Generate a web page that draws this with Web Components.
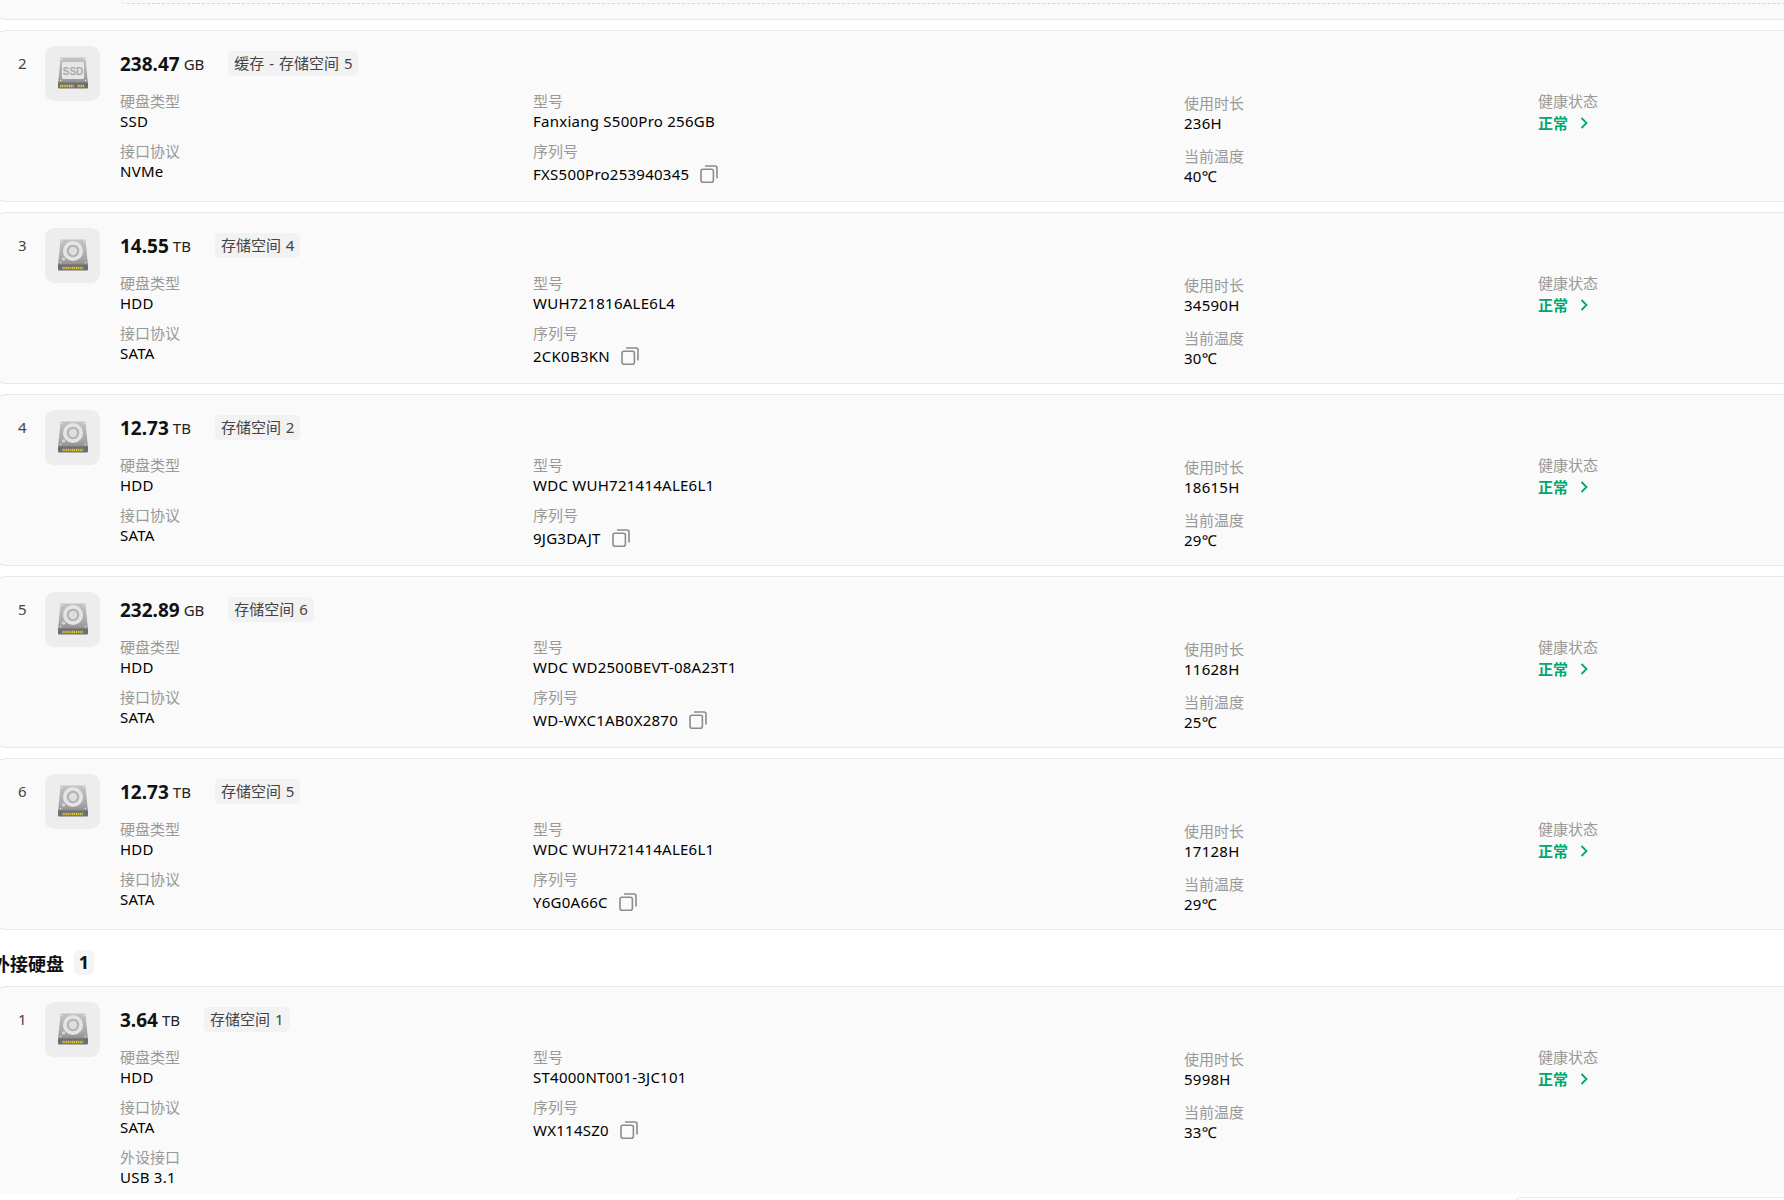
<!DOCTYPE html>
<html lang="zh">
<head>
<meta charset="utf-8">
<title>硬盘列表</title>
<style>
	html, body {
		margin: 0;
		height: 1200px;
		overflow: hidden;
		background: #fff;
	}
	body {
		font-family: "Noto Sans", "Noto Sans CJK SC", sans-serif;
		font-size: 15px;
		color: #000;
	}
	disk-list {
		margin: -10px 0 0 -6px;
		width: 1800px;
	}
</style>
</head>
<body>
<disk-list>
	<disk-stub></disk-stub>
	<disk-card index="2" kind="ssd" size="238.47" unit="GB" tag="缓存 - 存储空间 5" type="SSD" proto="NVMe" model="Fanxiang S500Pro 256GB" serial="FXS500Pro253940345" hours="236H" temp="40℃"></disk-card>
	<disk-card index="3" size="14.55" unit="TB" tag="存储空间 4" type="HDD" proto="SATA" model="WUH721816ALE6L4" serial="2CK0B3KN" hours="34590H" temp="30℃"></disk-card>
	<disk-card index="4" size="12.73" unit="TB" tag="存储空间 2" type="HDD" proto="SATA" model="WDC WUH721414ALE6L1" serial="9JG3DAJT" hours="18615H" temp="29℃"></disk-card>
	<disk-card index="5" size="232.89" unit="GB" tag="存储空间 6" type="HDD" proto="SATA" model="WDC WD2500BEVT-08A23T1" serial="WD-WXC1AB0X2870" hours="11628H" temp="25℃"></disk-card>
	<disk-card index="6" size="12.73" unit="TB" tag="存储空间 5" type="HDD" proto="SATA" model="WDC WUH721414ALE6L1" serial="Y6G0A66C" hours="17128H" temp="29℃"></disk-card>
	<section-title count="1">外接硬盘</section-title>
	<disk-card index="1" size="3.64" unit="TB" tag="存储空间 1" type="HDD" proto="SATA" port="USB 3.1" model="ST4000NT001-3JC101" serial="WX114SZ0" hours="5998H" temp="33℃"></disk-card>
</disk-list>
<float-panel></float-panel>

<template id="disk-card-tpl">
	<style>
		:host {
			display: block;
			box-sizing: border-box;
			height: 172px;
			margin-bottom: 10px;
			background: #fafafa;
			border: 1px solid #e8e8e8;
			border-right: 0;
			border-radius: 12px;
		}
		:host([port]) {
			height: 207px;
			margin-bottom: 0;
			border-bottom: 0;
			border-radius: 12px 0 0 0;
		}
		.row {
			display: flex;
			padding: 16px 0 0 23px;
		}
		.num {
			width: 27px;
			flex: none;
			color: #444;
			line-height: 33px;
			font-size: 15px;
		}
		disk-icon {
			margin-top: -1px;
		}
		.main {
			margin-left: 20px;
			flex: 1;
		}
		.head {
			display: flex;
			align-items: center;
			height: 33px;
		}
		.size {
			font-size: 19px;
			font-weight: 700;
			color: #111;
		}
		.unit {
			margin-left: 4px;
			font-size: 15px;
			color: #222;
		}
		.tag {
			margin-left: 24px;
			height: 25px;
			line-height: 25px;
			padding: 0 6px;
			background: #f2f2f2;
			border-radius: 5px;
			color: #444;
			font-size: 15px;
			word-spacing: 1px;
		}
		.grid {
			display: grid;
			grid-template-columns: 413px 651px 354px 1fr;
			margin-top: 11px;
		}
		.col {
			display: flex;
			flex-direction: column;
			gap: 10px;
		}
		.col.wide {
			gap: 13px;
			padding-top: 2px;
		}
		.ok {
			display: inline-flex;
			align-items: center;
			gap: 12px;
			margin-top: 2px;
			color: #00a870;
			font-weight: 700;
			letter-spacing: 0;
		}
		.serial {
			display: inline-flex;
			align-items: center;
			gap: 11px;
			margin-top: 3px;
		}
	</style>
	<div class="row">
		<div class="num"></div>
		<disk-icon></disk-icon>
		<div class="main">
			<div class="head">
				<span class="size"></span><span class="unit"></span><span class="tag"></span>
			</div>
			<div class="grid">
				<div class="col">
					<info-item label="硬盘类型" class="type"></info-item>
					<info-item label="接口协议" class="proto"></info-item>
				</div>
				<div class="col">
					<info-item label="型号" class="model"></info-item>
					<info-item label="序列号"><span class="serial"><span class="sn"></span><copy-icon></copy-icon></span></info-item>
				</div>
				<div class="col wide">
					<info-item label="使用时长" class="hours"></info-item>
					<info-item label="当前温度" class="temp"></info-item>
				</div>
				<div class="col">
					<info-item label="健康状态"><span class="ok">正常<svg width="8" height="12" viewBox="0 0 8 12" fill="none" stroke="#00a870" stroke-width="1.8"><path d="M1.500 1 6.500 6 1.500 11"/></svg></span></info-item>
				</div>
			</div>
		</div>
	</div>
</template>

<script>
// Plain value + label pair, value comes from the slot
class InfoItem extends HTMLElement {
	constructor() {
		super();
		this.attachShadow({ mode: "open" });
	}

	connectedCallback() {
		this.shadowRoot.innerHTML = `
			<style>
				:host { display: block; height: 40px; font-size: 15px; line-height: 20px; }
				.label { color: #999; }
				.value { color: #000; letter-spacing: .25px; }
			</style>
			<div class="label">${this.getAttribute("label") || ""}</div>
			<div class="value"><slot></slot></div>
		`;
	}
}

class CopyIcon extends HTMLElement {
	constructor() {
		super();
		this.attachShadow({ mode: "open" });
		this.shadowRoot.innerHTML = `
			<style>:host { display: inline-flex; }</style>
			<svg width="18" height="18" viewBox="0 0 18 18" fill="none" stroke="#8c8c8c" stroke-width="1.6">
				<rect x="1" y="4.200" width="12.400" height="13" rx="2"/>
				<path d="M5 1h10a2 2 0 0 1 2 2v10.500"/>
			</svg>
		`;
	}
}

// Drive picture: disc for HDD, label for SSD
class DiskIcon extends HTMLElement {
	static get observedAttributes() {
		return ["kind"];
	}

	constructor() {
		super();
		this.attachShadow({ mode: "open" });
	}

	connectedCallback() {
		this.render();
	}

	attributeChangedCallback() {
		this.render();
	}

	render() {
		const ssd = this.getAttribute("kind") === "ssd";
		const uid = ssd ? "s" : "h";
		const face = ssd
			? `<rect x="5" y="5" width="22" height="17" rx="1.500" fill="#e6e6e6"/>
			   <text x="16" y="17.500" text-anchor="middle" font-family="Liberation Sans" font-weight="700" font-size="10" fill="#a8a8a8">SSD</text>`
			: `<circle cx="16" cy="12" r="10" fill="#e4e4e4"/>
			   <circle cx="16" cy="12" r="6.200" fill="#b0b0b0"/>
			   <circle cx="16" cy="12" r="4.200" fill="#dedede"/>
			   <circle cx="6.500" cy="20" r="1.800" fill="#d4d4d4"/>`;
		const pins = ssd
			? `<path d="M3 29h14M20.500 29h7" stroke="#e0c840" stroke-width="2.400" stroke-dasharray="1.200 .6"/>`
			: `<path d="M5.500 29h21" stroke="#e0c840" stroke-width="2.400" stroke-dasharray="1.200 .7"/>`;
		this.shadowRoot.innerHTML = `
			<style>
				:host {
					display: flex;
					align-items: center;
					justify-content: center;
					flex: none;
					width: 55px;
					height: 55px;
					background: #ededed;
					border-radius: 9px;
				}
				svg { margin-top: -2px; }
			</style>
			<svg width="32" height="32" viewBox="0 0 32 32">
				<defs>
					<linearGradient id="${uid}" x1="0" y1="0" x2="0" y2="1">
						<stop offset="0" stop-color="#c4c4c4"/>
						<stop offset=".7" stop-color="#a8a8a8"/>
						<stop offset="1" stop-color="#8a8a8a"/>
					</linearGradient>
				</defs>
				<path d="M3.500 .5h25l2.500 26.500H1z" fill="url(#${uid})"/>
				<g fill="#e8e8e8">
					<circle cx="4.800" cy="2.500" r=".8"/><circle cx="27.200" cy="2.500" r=".8"/>
					<circle cx="3.600" cy="23.500" r=".8"/><circle cx="28.400" cy="23.500" r=".8"/>
				</g>
				${face}
				<path d="M1 25.500h30v5a1 1 0 0 1-1 1H2a1 1 0 0 1-1-1z" fill="#6e6e6e"/>
				${pins}
			</svg>
		`;
	}
}

class DiskCard extends HTMLElement {
	constructor() {
		super();
		this.attachShadow({ mode: "open" });
		const tpl = document.getElementById("disk-card-tpl");
		this.shadowRoot.appendChild(tpl.content.cloneNode(true));
	}

	connectedCallback() {
		const root = this.shadowRoot;
		const attr = (name) => this.getAttribute(name) || "";
		root.querySelector(".num").textContent = attr("index");
		root.querySelector("disk-icon").setAttribute("kind", attr("kind") || "hdd");
		root.querySelector(".size").textContent = attr("size");
		root.querySelector(".unit").textContent = attr("unit");
		root.querySelector(".tag").textContent = attr("tag");
		root.querySelector(".type").textContent = attr("type");
		root.querySelector(".proto").textContent = attr("proto");
		root.querySelector(".model").textContent = attr("model");
		root.querySelector(".sn").textContent = attr("serial");
		root.querySelector(".hours").textContent = attr("hours");
		root.querySelector(".temp").textContent = attr("temp");
		if (this.hasAttribute("port")) {
			const item = document.createElement("info-item");
			item.setAttribute("label", "外设接口");
			item.textContent = attr("port");
			root.querySelector(".col").appendChild(item);
		}
	}
}

// Tail end of the card scrolled out of view at the top
class DiskStub extends HTMLElement {
	constructor() {
		super();
		this.attachShadow({ mode: "open" });
		this.shadowRoot.innerHTML = `
			<style>
				:host {
					display: block;
					box-sizing: border-box;
					height: 30px;
					margin-bottom: 10px;
					background: #fafafa;
					border: 1px solid #e8e8e8;
					border-width: 0 0 1px 1px;
					border-radius: 0 0 12px 12px;
				}
				.dash {
					box-sizing: border-box;
					height: 14px;
					margin-left: 126px;
					border: 1px dashed #d4d4d4;
					border-width: 0 0 1px 1px;
					border-radius: 0 0 0 5px;
				}
			</style>
			<div class="dash"></div>
		`;
	}
}

class SectionTitle extends HTMLElement {
	constructor() {
		super();
		this.attachShadow({ mode: "open" });
	}

	connectedCallback() {
		this.shadowRoot.innerHTML = `
			<style>
				:host {
					display: flex;
					align-items: center;
					gap: 10px;
					height: 25px;
					margin: 20px 0 11px -2px;
					font-size: 18px;
					font-weight: 700;
					color: #111;
				}
				.count {
					width: 20px;
					height: 25px;
					line-height: 25px;
					text-align: center;
					background: #f5f5f5;
					border-radius: 5px;
				}
			</style>
			<slot></slot>
			<span class="count">${this.getAttribute("count") || ""}</span>
		`;
	}
}

// Panel floating over the page, only its top edge is in view
class FloatPanel extends HTMLElement {
	constructor() {
		super();
		this.attachShadow({ mode: "open" });
		this.shadowRoot.innerHTML = `
			<style>
				:host {
					position: absolute;
					left: 1515px;
					top: 1197px;
					right: 0;
					height: 20px;
					background: #fff;
					border-top: 1px solid #e8e8e8;
					border-left: 1px solid #e8e8e8;
					border-radius: 6px 0 0 0;
				}
			</style>
		`;
	}
}

class DiskList extends HTMLElement {
	constructor() {
		super();
		this.attachShadow({ mode: "open" });
		this.shadowRoot.innerHTML = `
			<style>:host { display: block; }</style>
			<slot></slot>
		`;
	}
}

customElements.define("info-item", InfoItem);
customElements.define("copy-icon", CopyIcon);
customElements.define("disk-icon", DiskIcon);
customElements.define("disk-card", DiskCard);
customElements.define("disk-stub", DiskStub);
customElements.define("section-title", SectionTitle);
customElements.define("float-panel", FloatPanel);
customElements.define("disk-list", DiskList);
</script>
</body>
</html>
